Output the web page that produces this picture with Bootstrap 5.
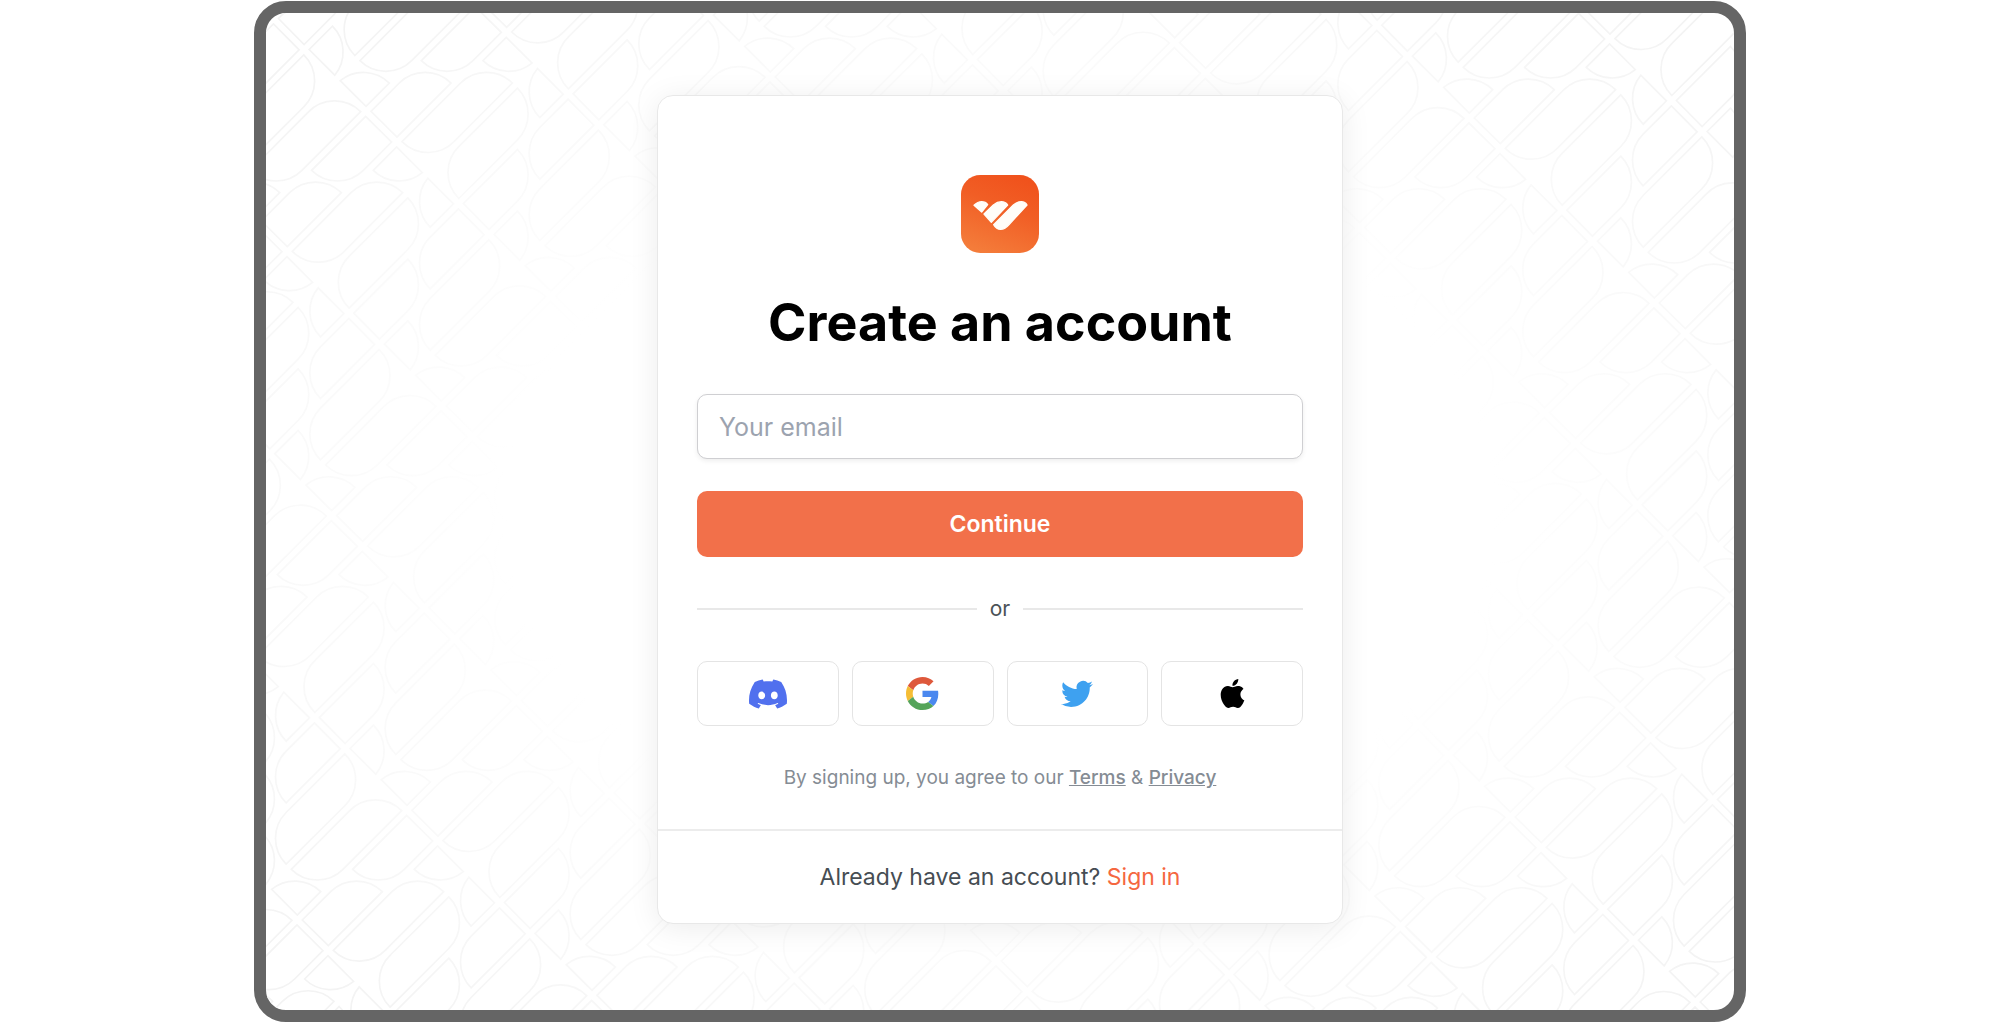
<!DOCTYPE html>
<html lang="en">
<head>
<meta charset="utf-8">
<meta name="viewport" content="width=device-width, initial-scale=1">
<title>Create an account</title>
<link href="https://cdn.jsdelivr.net/npm/bootstrap@5.3.0/dist/css/bootstrap.min.css" rel="stylesheet">
<style>
  body { font-family: Inter, "Liberation Sans", sans-serif; background: #fff; }
  .stage { min-height: 100vh; padding: 1px 12.7%; }
  .device { border: 12px solid #656565; border-radius: 32px; background: #fff; padding-top: 82px; }
  .backdrop { width: 100%; height: 100%; }
  .signup { width: 686px; border: 1px solid #e8e8e8; border-radius: 16px; box-shadow: 0 4px 30px rgba(0, 0, 0, .08); }
  .signup-main { padding: 79px 39px 39px; }
  .signup-title { font-size: 52px; line-height: 66px; margin: 37px 0 38px; color: #000; }
  .email-box { height: 65px; padding: 0 21px; font-size: 25px; border: 1px solid #cfcfd2; border-radius: 10px; box-shadow: 0 2px 5px rgba(0, 0, 0, .07); }
  .email-box::placeholder { color: #9ca3af; }
  .btn-go { height: 66px; margin-top: 32px; border: 0; border-radius: 10px; background: #f2704a; color: #fff; font-size: 23px; font-weight: 600; }
  .btn-go:hover { background: #e8623b; color: #fff; }
  .or-row { margin: 40px 0; gap: 13px; font-size: 21px; line-height: 24px; color: #4b5257; }
  .or-line { height: 2px; background: #e8e8e8; }
  .socials { gap: 13px; }
  .btn-social { height: 65px; padding: 0; border: 1px solid #e4e4e4; border-radius: 10px; background: #fff; }
  .terms { margin-top: 40px; font-size: 19px; line-height: 24px; color: #858c94; }
  .terms a { color: #858c94; font-weight: 500; }
  .signup-foot { border-top: 2px solid #ececec; padding: 32px 0; font-size: 23px; line-height: 28px; color: #464d53; }
  .signup-foot a { color: #f5673f; }
</style>
<script src="https://cdn.jsdelivr.net/npm/bootstrap@5.3.0/dist/js/bootstrap.bundle.min.js"></script>
</head>
<body>
<div class="stage d-flex">
  <div class="device flex-fill position-relative overflow-hidden d-flex justify-content-center align-items-start">
    <svg class="backdrop position-absolute top-0 start-0" viewBox="0 0 1468 997" preserveAspectRatio="xMidYMid slice" aria-hidden="true">
      <defs>
        <radialGradient id="fade" cx=".5" cy=".5" r=".67">
          <stop offset=".5" stop-color="#fff"/>
          <stop offset="1" stop-color="#fff" stop-opacity="0"/>
        </radialGradient>
        <!-- one outlined mark: leaf, middle strip, long strip -->
        <g id="mark">
          <path d="M-123-138A110 110 0 0 1 24-131L-46-61Z"/>
          <path d="M-31-46L54-131A110 110 0 0 1 209-131L47 31Z"/>
          <path d="M62 45L238-131A110 110 0 0 1 393-131L220 43A110 110 0 0 1 62 45Z"/>
        </g>
        <g id="pair"><use href="#mark"/><use href="#mark" transform="rotate(180)"/></g>
        <g id="cell"><use href="#pair"/><use href="#pair" transform="matrix(0 1 1 0 277.5 277.5)"/></g>
        <g id="four">
          <use href="#cell"/><use href="#cell" x="329" y="-329"/><use href="#cell" x="658" y="-658"/><use href="#cell" x="987" y="-987"/>
        </g>
        <g id="band">
          <use href="#four" x="-2632" y="2632"/><use href="#four" x="-1316" y="1316"/><use href="#four"/><use href="#four" x="1316" y="-1316"/><use href="#four" x="2632" y="-2632"/>
        </g>
      </defs>
      <g transform="translate(115.3 113.7) scale(.33333)" fill="none" stroke="#f3f3f3" stroke-width="5">
        <use href="#band" x="-555" y="-555"/><use href="#band"/><use href="#band" x="555" y="555"/><use href="#band" x="1110" y="1110"/>
        <use href="#band" x="1665" y="1665"/><use href="#band" x="2220" y="2220"/><use href="#band" x="2775" y="2775"/><use href="#band" x="3330" y="3330"/><use href="#band" x="3885" y="3885"/>
      </g>
      <rect width="1468" height="997" fill="url(#fade)"/>
    </svg>

    <main class="signup position-relative bg-white">
      <form class="signup-main text-center" onsubmit="return false">
        <svg class="d-block mx-auto" width="78" height="78" viewBox="0 0 234 234" role="img" aria-label="Logo">
          <defs>
            <linearGradient id="brand" x1=".7" y1="0" x2=".3" y2="1">
              <stop offset="0" stop-color="#f0521c"/><stop offset=".4" stop-color="#f15e25"/><stop offset="1" stop-color="#f47c3a"/>
            </linearGradient>
          </defs>
          <rect width="234" height="234" rx="58" fill="url(#brand)"/>
          <g fill="#fffdf9" stroke="#fffdf9" stroke-width="4" stroke-linejoin="round">
            <path d="M39 91Q50 80 62 80Q74 80 80 89L62 111Z"/>
            <path d="M69 117L97 90Q109 80 121 80Q134 80 140 90L91 142Z"/>
            <path d="M98 149L157 90Q169 80 181 80Q193 80 198 90L145 148Q132 163 119 163Q106 163 98 149Z"/>
          </g>
        </svg>
        <h1 class="signup-title fw-bold">Create an account</h1>
        <label class="visually-hidden" for="email">Your email</label>
        <input class="form-control email-box" id="email" type="email" placeholder="Your email">
        <button class="btn btn-go w-100" type="submit">Continue</button>
        <div class="or-row d-flex align-items-center">
          <span class="or-line flex-fill"></span><span>or</span><span class="or-line flex-fill"></span>
        </div>
        <div class="socials d-flex">
          <button class="btn btn-social col d-flex align-items-center justify-content-center" type="button" aria-label="Discord">
            <svg width="38" height="38" viewBox="0 0 24 24" fill="#5170ee"><path d="M20.317 4.3698a19.7913 19.7913 0 00-4.8851-1.5152.0741.0741 0 00-.0785.0371c-.211.3753-.4447.8648-.6083 1.2495-1.8447-.2762-3.68-.2762-5.4868 0-.1636-.3933-.4058-.8742-.6177-1.2495a.077.077 0 00-.0785-.037 19.7363 19.7363 0 00-4.8852 1.515.0699.0699 0 00-.0321.0277C.5334 9.0458-.319 13.5799.0992 18.0578a.0824.0824 0 00.0312.0561c2.0528 1.5076 4.0413 2.4228 5.9929 3.0294a.0777.0777 0 00.0842-.0276c.4616-.6304.8731-1.2952 1.226-1.9942a.076.076 0 00-.0416-.1057c-.6528-.2476-1.2743-.5495-1.8722-.8923a.077.077 0 01-.0076-.1277c.1258-.0943.2517-.1923.3718-.2914a.0743.0743 0 01.0776-.0105c3.9278 1.7933 8.18 1.7933 12.0614 0a.0739.0739 0 01.0785.0095c.1202.099.246.1981.3728.2924a.077.077 0 01-.0066.1276 12.2986 12.2986 0 01-1.873.8914.0766.0766 0 00-.0407.1067c.3604.698.7719 1.3628 1.225 1.9932a.076.076 0 00.0842.0286c1.961-.6067 3.9495-1.5219 6.0023-3.0294a.077.077 0 00.0313-.0552c.5004-5.177-.8382-9.6739-3.5485-13.6604a.061.061 0 00-.0312-.0286zM8.02 15.3312c-1.1825 0-2.1569-1.0857-2.1569-2.419 0-1.3332.9555-2.4189 2.157-2.4189 1.2108 0 2.1757 1.0952 2.1568 2.419 0 1.3332-.9555 2.4189-2.1569 2.4189zm7.9748 0c-1.1825 0-2.1569-1.0857-2.1569-2.419 0-1.3332.9554-2.4189 2.1569-2.4189 1.2108 0 2.1757 1.0952 2.1568 2.419 0 1.3332-.946 2.4189-2.1568 2.4189Z"/></svg>
          </button>
          <button class="btn btn-social col d-flex align-items-center justify-content-center" type="button" aria-label="Google">
            <svg width="33" height="33" viewBox="0 0 48 48"><path fill="#de583b" d="M24 9.5c3.54 0 6.71 1.22 9.21 3.6l6.85-6.85C35.9 2.38 30.47 0 24 0 14.62 0 6.51 5.38 2.56 13.22l7.98 6.19C12.43 13.72 17.74 9.5 24 9.5z"/><path fill="#4b88ef" d="M46.98 24.55c0-1.57-.15-3.09-.38-4.55H24v9.02h12.94c-.58 2.96-2.26 5.48-4.78 7.18l7.73 6c4.51-4.18 7.09-10.36 7.09-17.65z"/><path fill="#f5bd35" d="M10.53 28.59c-.48-1.45-.76-2.99-.76-4.59s.27-3.14.76-4.59l-7.98-6.19C.92 16.46 0 20.12 0 24c0 3.88.92 7.54 2.56 10.78l7.97-6.19z"/><path fill="#55a45a" d="M24 48c6.48 0 11.93-2.13 15.89-5.81l-7.73-6c-2.15 1.45-4.92 2.3-8.16 2.3-6.26 0-11.57-4.22-13.47-9.91l-7.98 6.19C6.51 42.62 14.62 48 24 48z"/></svg>
          </button>
          <button class="btn btn-social col d-flex align-items-center justify-content-center" type="button" aria-label="Twitter">
            <svg width="32" height="32" viewBox="0 0 24 24" fill="#3ea1f0"><path d="M23.953 4.57a10 10 0 01-2.825.775 4.958 4.958 0 002.163-2.723c-.951.555-2.005.959-3.127 1.184a4.92 4.92 0 00-8.384 4.482C7.69 8.095 4.067 6.13 1.64 3.162a4.822 4.822 0 00-.666 2.475c0 1.71.87 3.213 2.188 4.096a4.904 4.904 0 01-2.228-.616v.06a4.923 4.923 0 003.946 4.827 4.996 4.996 0 01-2.212.085 4.936 4.936 0 004.604 3.417 9.867 9.867 0 01-6.102 2.105c-.39 0-.779-.023-1.17-.067a13.995 13.995 0 007.557 2.209c9.053 0 13.998-7.496 13.998-13.985 0-.21 0-.42-.015-.63A9.935 9.935 0 0024 4.59z"/></svg>
          </button>
          <button class="btn btn-social col d-flex align-items-center justify-content-center" type="button" aria-label="Apple">
            <svg width="29" height="29" viewBox="0 0 24 24" fill="#000"><path d="M12.152 6.896c-.948 0-2.415-1.078-3.96-1.04-2.04.027-3.91 1.183-4.961 3.014-2.117 3.675-.546 9.103 1.519 12.09 1.013 1.454 2.208 3.09 3.792 3.039 1.52-.065 2.09-.987 3.935-.987 1.831 0 2.35.987 3.96.948 1.637-.026 2.676-1.48 3.676-2.948 1.156-1.688 1.636-3.325 1.662-3.415-.039-.013-3.182-1.221-3.22-4.857-.026-3.04 2.48-4.494 2.597-4.559-1.429-2.09-3.623-2.324-4.39-2.376-2-.156-3.675 1.09-4.61 1.09zM15.53 3.83c.843-1.012 1.4-2.427 1.245-3.83-1.207.052-2.662.805-3.532 1.818-.78.896-1.454 2.338-1.273 3.714 1.338.104 2.715-.688 3.559-1.701"/></svg>
          </button>
        </div>
        <p class="terms mb-0">By signing up, you agree to our <a href="#">Terms</a> &amp; <a href="#">Privacy</a></p>
      </form>
      <div class="signup-foot text-center">Already have an account? <a class="text-decoration-none" href="#">Sign in</a></div>
    </main>
  </div>
</div>
</body>
</html>
